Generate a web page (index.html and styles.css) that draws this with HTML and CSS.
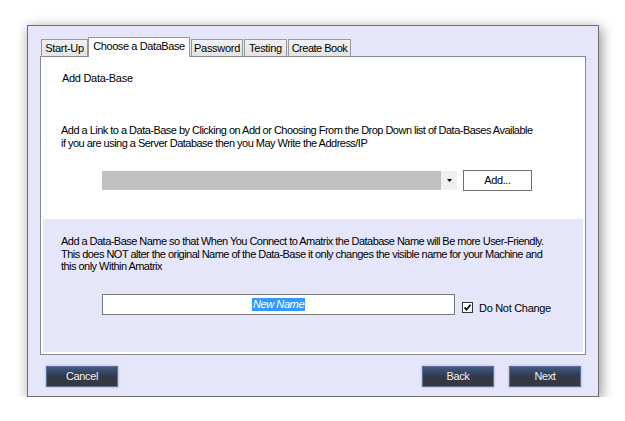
FILE: index.html
```html
<!DOCTYPE html>
<html>
<head>
<meta charset="utf-8">
<link rel="stylesheet" href="styles.css">
</head>
<body>
<div class="window">
  <div class="tabs">
    <div class="tab t-startup">Start-Up</div>
    <div class="tab active t-choose">Choose a DataBase</div>
    <div class="tab t-password">Password</div>
    <div class="tab t-testing">Testing</div>
    <div class="tab t-book">Create Book</div>
  </div>
  <div class="panel">
    <div class="top">
      <div class="heading">Add Data-Base</div>
      <p class="desc">Add a Link to a Data-Base by Clicking on Add or Choosing From the Drop Down list of Data-Bases Available<br>if you are using a Server Database then you May Write the Address/IP</p>
      <div class="row">
        <div class="combo"><div class="combo-field"></div><div class="combo-arrow"><svg width="5" height="3" viewBox="0 0 5 3"><path d="M0 0h5L2.5 3z" fill="#000"/></svg></div></div>
        <div class="btn-add">Add...</div>
      </div>
    </div>
    <div class="bottom">
      <p class="desc2">Add a Data-Base Name so that When You Connect to Amatrix the Database Name will Be more User-Friendly.<br>This does NOT alter the original Name of the Data-Base it only changes the visible name for your Machine and<br>this only Within Amatrix</p>
      <div class="row2">
        <div class="textbox"><span class="sel">New Name</span></div>
        <label class="check"><span class="box"><svg width="9" height="9" viewBox="0 0 9 9"><path d="M1.5 4.5l2 2.2L7.5 1.8" fill="none" stroke="#000" stroke-width="1.8"/></svg></span>Do Not Change</label>
      </div>
    </div>
  </div>
  <div class="footer">
    <div class="dbtn">Cancel</div>
    <div class="spacer"></div>
    <div class="dbtn">Back</div>
    <div class="dbtn">Next</div>
  </div>
</div>
</body>
</html>
```
FILE: styles.css
```css
html, body { margin: 0; padding: 0; background: #fff; }
body {
  padding: 25px 0 0 27px;
  font-family: "Liberation Sans", Arial, sans-serif;
  font-size: 11px;
  color: #000;
}
.window {
  box-sizing: border-box;
  width: 572px;
  height: 372px;
  background: #e6e6fa;
  border: 1px solid #6e6e6e;
  box-shadow: 2px 3px 12px rgba(0,0,0,0.45);
  padding: 11px 0 0 12px;
}
.tabs {
  display: flex;
  align-items: flex-end;
  height: 19px;
  padding-left: 1px;
}
.tab {
  box-sizing: border-box;
  height: 17px;
  line-height: 16px;
  text-align: center;
  white-space: nowrap;
  border: 1px solid #989898;
  border-bottom: none;
  background: linear-gradient(#f2f2f2, #e3e3e3);
  margin-left: 1px;
  letter-spacing: -0.3px;
}
.t-startup { width: 47px; margin-left: 0; }
.t-choose { width: 102px; margin-left: 0; }
.t-password { width: 52px; }
.t-testing { width: 43px; }
.t-book { width: 63px; letter-spacing: -0.5px; }
.tab.active {
  height: 20px;
  margin-bottom: -1px;
  background: #fff;
  line-height: 16px;
  letter-spacing: -0.4px;
  position: relative;
  z-index: 1;
}
.panel {
  box-sizing: border-box;
  width: 546px;
  height: 299px;
  border: 1px solid #8a8a8a;
  background: #fff;
  padding: 0 2px 2px 2px;
  display: flex;
  flex-direction: column;
}
.top { height: 162px; padding-left: 19px; }
.heading { padding-top: 15px; letter-spacing: -0.3px; }
.desc {
  margin: 40px 0 0 -1px;
  line-height: 13px;
  letter-spacing: -0.52px;
}
.row { display: flex; margin: 20px 0 0 40px; align-items: center; }
.combo { display: flex; width: 355px; height: 19px; }
.combo-field { flex: 1; background: #c0c0c0; }
.combo-arrow {
  width: 16px; background: #f0f0f0;
  display: flex; align-items: center; justify-content: center;
}
.btn-add {
  box-sizing: border-box;
  width: 69px; height: 21px;
  margin-left: 6px;
  border: 1px solid #707070;
  background: #fff;
  text-align: center;
  line-height: 19px;
  letter-spacing: -0.4px;
}
.bottom {
  flex: 1;
  background: #e6e6fa;
  padding-left: 18px;
}
.desc2 {
  margin: 16px 0 0 0;
  line-height: 12.5px;
  letter-spacing: -0.53px;
}
.row2 { display: flex; align-items: center; margin: 21px 0 0 41px; }
.textbox {
  box-sizing: border-box;
  width: 353px; height: 21px;
  border: 1px solid #7a7a7a;
  background: #fff;
  display: flex; justify-content: center; align-items: center;
}
.sel {
  background: #3399ff; color: #fff; font-style: italic;
  line-height: 13px; padding: 0 1px; letter-spacing: -0.4px;
}
.check { display: flex; align-items: center; margin: 7px 0 0 7px; letter-spacing: -0.3px; }
.box {
  box-sizing: border-box;
  width: 11px; height: 11px;
  border: 1px solid #333;
  background: #fff;
  margin-right: 6px;
  display: flex; align-items: center; justify-content: center;
}
.footer {
  display: flex;
  margin: 11px 0 0 6px;
  width: 535px;
}
.spacer { flex: 1; }
.dbtn {
  box-sizing: border-box;
  width: 72px; height: 21px;
  margin-right: 15px;
  border: 1px solid #5d7197;
  background: linear-gradient(#3d5b86 0%, #333a4d 45%, #38383c 100%);
  color: #f2f2f2;
  text-align: center;
  line-height: 19px;
  letter-spacing: -0.4px;
  box-shadow: 0 0 2px rgba(80,90,140,0.5);
}
.dbtn:last-child { margin-right: 0; }
```
